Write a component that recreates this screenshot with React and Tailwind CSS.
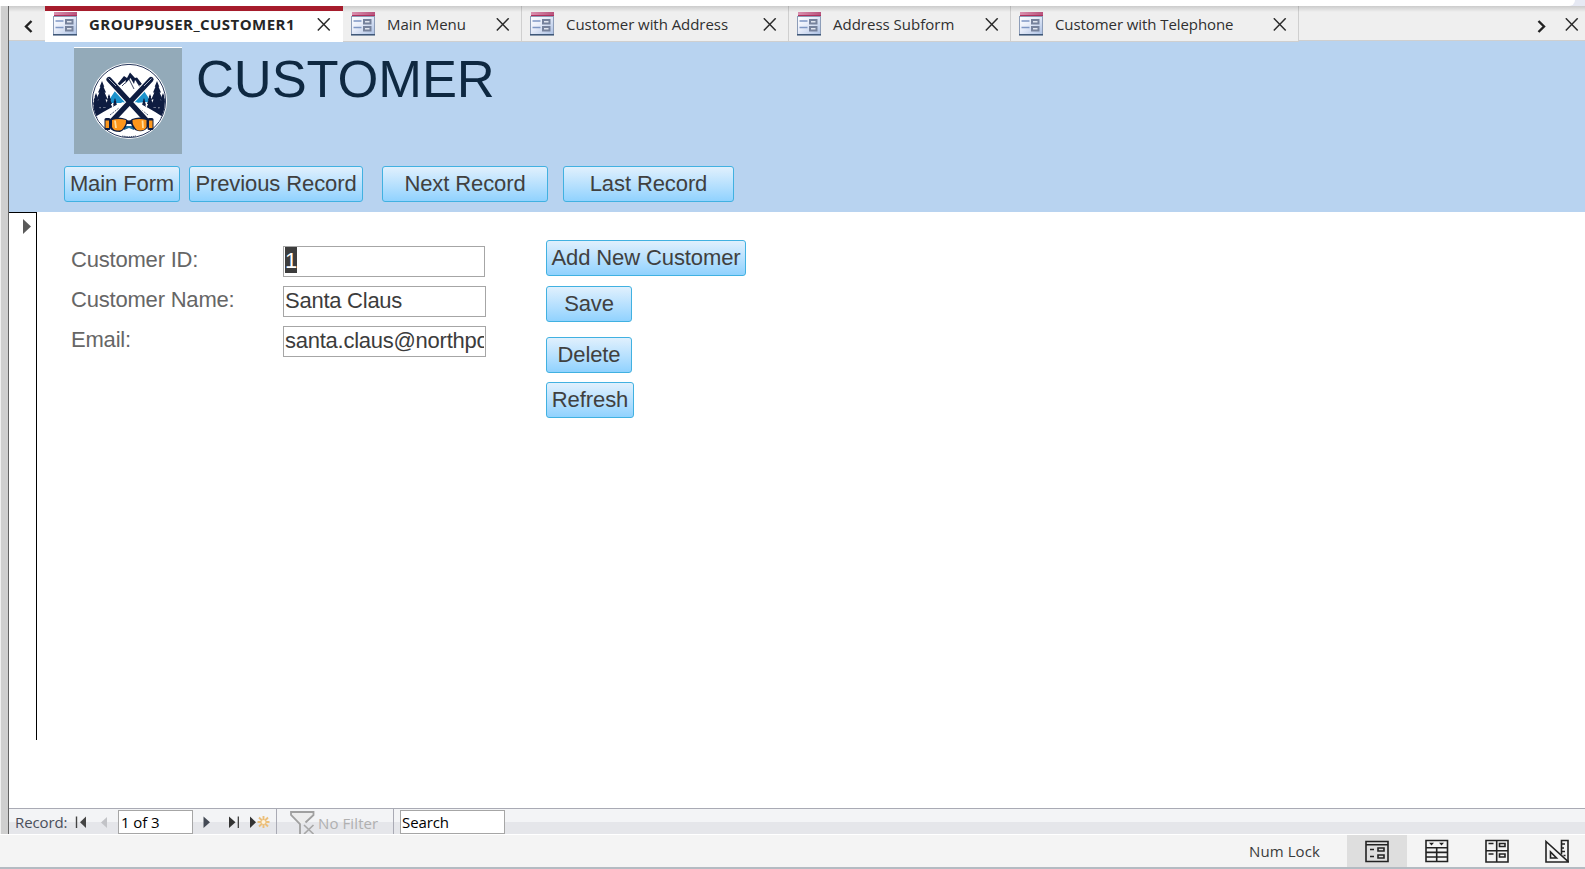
import React from "react";

const ui = "font-['Open_Sans','Noto_Sans',sans-serif] whitespace-nowrap";
const arial = "font-['Liberation_Sans',Arial,sans-serif] whitespace-nowrap";

function FormIcon() {
  return (
    <svg className="block shrink-0" width="24" height="24" viewBox="0 0 24 24">
      <defs>
        <linearGradient id="fi-head" x1="0" y1="0" x2="1" y2="0">
          <stop offset="0" stopColor="#d98fae" />
          <stop offset="1" stopColor="#b8527c" />
        </linearGradient>
        <linearGradient id="fi-body" x1="0" y1="0" x2="1" y2="1">
          <stop offset="0" stopColor="#ffffff" />
          <stop offset="0.4" stopColor="#e9eefa" />
          <stop offset="1" stopColor="#a9bee2" />
        </linearGradient>
      </defs>
      <rect x="0.5" y="4.5" width="23" height="18.5" fill="url(#fi-body)" stroke="#8d9db8" />
      <path d="M0 22.7H24" stroke="#3f5878" strokeWidth="1.4" />
      <rect x="1" y="0" width="23" height="4" fill="url(#fi-head)" />
      <path d="M1 3.5H24" stroke="#b0305c" />
      <path d="M2.500 9H10.500M2.500 15.500H10.500" stroke="#7f97c4" strokeWidth="1.600" />
      <rect x="13" y="8" width="6.500" height="3.500" fill="#dfe4ee" stroke="#76829c" strokeWidth="2" />
      <rect x="13" y="15" width="6.500" height="3.500" fill="#dfe4ee" stroke="#76829c" strokeWidth="2" />
    </svg>
  );
}

function CloseIcon() {
  return (
    <svg className="block shrink-0" width="14" height="14" viewBox="0 0 14 14">
      <path d="M0.8 0.3L12.700 12.500M12.700 0.3L0.8 12.500" stroke="#2b2b2b" strokeWidth="1.5" fill="none" />
    </svg>
  );
}

function Tab({ label, width, textWidth, spacing = "" }) {
  return (
    <div className={`flex h-[36px] shrink-0 items-start border-r border-b border-[#cfcfcf] pt-[6px] pl-[8px] ${width}`}>
      <FormIcon />
      <span className={`${ui} ml-[12px] text-[15px] leading-[24px] text-[#303030] ${textWidth} ${spacing}`}>{label}</span>
      <div className="mt-[6px]">
        <CloseIcon />
      </div>
    </div>
  );
}

function FormButton({ children, className }) {
  return (
    <button
      className={`${arial} h-[36px] shrink-0 rounded-[3px] border border-[#41b1e1] bg-linear-to-b from-[#e0f0fd] to-[#90d2fe] pb-px text-center text-[22px] leading-[33px] tracking-[-0.1px] text-[#404040] ${className}`}
    >
      {children}
    </button>
  );
}

function Tree({ x, y, s }) {
  return (
    <path
      transform={`translate(${x} ${y}) scale(${s})`}
      d="M0 0L2 5L1.3 5L3.5 10L2.3 10L5 16L3 16L6 23L1 23V27H-1V23L-6 23L-3 16L-5 16L-2.3 10L-3.5 10L-1.3 5L-2 5Z"
      fill="#0e1c40"
    />
  );
}

function Logo() {
  return (
    <svg className="block" width="108" height="106" viewBox="0 0 108 106">
      <defs>
        <clipPath id="logo-disc">
          <circle cx="55" cy="53" r="36" />
        </clipPath>
      </defs>
      <circle cx="55" cy="53" r="38" fill="#fff" />
      <circle cx="55" cy="53" r="36.600" fill="#fff" stroke="#27375c" strokeWidth="1" />
      <g clipPath="url(#logo-disc)">
        <path d="M33 55L41 43L46 45L52 52L58 52L65 45L70 43L78 55L72 54L62 55L55 57L46 55Z" fill="#1b93cd" />
        <path d="M41 39L50 28L53 30L56 24.500L61 30L63 29.500L71 40L65 37L61 32L60 36L56.500 30L51 36L52 32L46 37Z" fill="#0e1c40" />
        <path d="M48 38L51 35M55 31L60 41M63 34L67 41" stroke="#0e1c40" strokeWidth="0.8" />
        <Tree x={28} y={33} s={1.15} />
        <Tree x={22} y={45} s={0.75} />
        <Tree x={35} y={46} s={0.62} />
        <Tree x={41} y={50} s={0.42} />
        <Tree x={83} y={33} s={1.15} />
        <Tree x={89} y={45} s={0.75} />
        <Tree x={76} y={46} s={0.62} />
        <Tree x={70} y={50} s={0.42} />
        <path d="M17 62Q30 58 39 61L31 70H20ZM93 62Q80 58 71 61L79 70H90Z" fill="#0e1c40" />
        <path d="M21 69Q37 59 49 54L53 57L37 76H22ZM89 69Q74 59 62 54L57 57L73 76H88Z" fill="#fff" />
        <path d="M36 67L45 60M74 67L65 60" stroke="#4c5874" strokeWidth="1" strokeDasharray="2 1" />
        <path d="M23 77L33 83M87 77L78 83" stroke="#1b93cd" strokeWidth="1.2" strokeDasharray="2 1" />
      </g>
      <path d="M35 31.500L73 73M77 31.500L38 73" stroke="#fff" strokeWidth="7.500" strokeLinecap="round" />
      <path d="M35 31.500L73 73M77 31.500L38 73" stroke="#0e1c40" strokeWidth="5.200" strokeLinecap="round" />
      <path d="M34.500 30.500L42 38M77.500 30.500L70 38" stroke="#cbd3df" strokeWidth="0.800" />
      <path d="M50 78H60V82L55 80L50 82Z" fill="#1b6f9c" />
      <rect x="30.500" y="70" width="6" height="12" rx="1.500" fill="#0e1c40" />
      <rect x="73.500" y="70" width="6" height="12" rx="1.500" fill="#0e1c40" />
      <rect x="31.500" y="72.500" width="3.500" height="7.500" fill="#fc961b" />
      <rect x="75" y="72.500" width="3.500" height="7.500" fill="#fc961b" />
      <path d="M36 71Q45 68 52 71Q55 74 58 71Q65 68 74 71V79Q71 84 64 83Q59 82 57 76H53Q51 82 46 84Q38 84 36 80Z" fill="#0e1c40" />
      <path d="M38 72Q45 70 52 72Q52.500 77 47.500 82Q40 84 38 79ZM72.500 72Q65 70 58.500 72Q58 77 63 82Q70 84 72.500 79Z" fill="#fc961b" />
      <path d="M41 72.500L42 80M68.500 72.500L69 80" stroke="#ffdc9b" strokeWidth="1.800" />
      <path d="M48 88Q55 89.500 62 88" stroke="#4b5873" strokeWidth="1.200" strokeDasharray="1.500 0.700" fill="none" />
    </svg>
  );
}

function Field({ className, children }) {
  return (
    <div className={`${arial} h-[31px] border border-[#a6a6a6] bg-white px-px text-[22px] leading-[27px] tracking-[-0.25px] text-[#3c3c3c] ${className}`}>
      <div className="h-[29px] overflow-hidden">{children}</div>
    </div>
  );
}

function TabBar() {
  return (
    <div className="relative flex h-[35px] shrink-0 bg-[#efefef]">
      <div className="flex h-[35px] w-[36px] shrink-0 items-start border-b border-[#cfcfcf] pt-[14px] pl-[15px]">
        <svg width="9" height="13" viewBox="0 0 9 13">
          <path d="M7.500 1L2 6.500L7.500 12" stroke="#222" strokeWidth="2.400" fill="none" />
        </svg>
      </div>
      <div className="flex h-[36px] w-[298px] shrink-0 items-start border-t-5 border-[#a61c2c] bg-white pt-[1px] pl-[8px]">
        <FormIcon />
        <span className={`${ui} ml-[12px] w-[228px] text-[15px] leading-[24px] font-bold tracking-[0.45px] text-[#262626]`}>
          GROUP9USER_CUSTOMER1
        </span>
        <div className="mt-[6px]">
          <CloseIcon />
        </div>
      </div>
      <Tab label="Main Menu" width="w-[179px]" textWidth="w-[109px]" />
      <Tab label="Customer with Address" width="w-[267px]" textWidth="w-[197px]" spacing="tracking-[-0.05px]" />
      <Tab label="Address Subform" width="w-[222px]" textWidth="w-[152px]" />
      <Tab label="Customer with Telephone" width="w-[288px]" textWidth="w-[218px]" spacing="tracking-[-0.08px]" />
      <div className="flex h-[35px] flex-1 items-start justify-end border-b border-[#cfcfcf] pr-[6px]">
        <svg className="mt-[14px] mr-[19px]" width="9" height="13" viewBox="0 0 9 13">
          <path d="M1.500 1L7 6.500L1.500 12" stroke="#222" strokeWidth="2.400" fill="none" />
        </svg>
        <div className="mt-[12px]">
          <CloseIcon />
        </div>
      </div>
      <div className="pointer-events-none absolute inset-x-0 top-0 h-[6px] bg-linear-to-b from-black/15 to-transparent" />
      <div className="pointer-events-none absolute top-0 left-[36px] h-[5px] w-[298px] bg-[#a61c2c]" />
    </div>
  );
}

function Header() {
  return (
    <header className="h-[171px] shrink-0 bg-[#b8d3f0] pt-[6px]">
      <div className="flex h-[107px] pl-[65px]">
        <div className="h-[107px] w-[108px] border-t border-white bg-[#93aab9]">
          <Logo />
        </div>
        <h1 className={`${arial} mt-px ml-[14px] h-[60px] text-[52.500px] leading-[62px] tracking-[-0.1px] text-[#0e2841]`}>CUSTOMER</h1>
      </div>
      <div className="mt-[12px] flex pl-[55px]">
        <FormButton className="w-[116px]">Main Form</FormButton>
        <FormButton className="ml-[9px] w-[174px]">Previous Record</FormButton>
        <FormButton className="ml-[19px] w-[166px]">Next Record</FormButton>
        <FormButton className="ml-[15px] w-[171px]">Last Record</FormButton>
      </div>
    </header>
  );
}

function Detail() {
  return (
    <main className="flex flex-1 bg-white">
      <div className="h-[528px] w-[28px] shrink-0 border-t border-r border-black pt-[6px] pl-[14px]">
        <svg className="block" width="8" height="15" viewBox="0 0 8 15">
          <path d="M0 0L8 7.500L0 15Z" fill="#5a5a5a" />
        </svg>
      </div>
      <div className={`${arial} ml-[34px] flex w-[212px] flex-col pt-[28px] text-[22px] leading-[40px] tracking-[-0.2px] text-[#666]`}>
        <span>Customer ID:</span>
        <span>Customer Name:</span>
        <span>Email:</span>
      </div>
      <div className="flex w-[203px] flex-col gap-[9px] pt-[34px]">
        <Field className="w-[202px]">
          <span className="inline-block h-[26px] w-[12px] bg-[#3c3c3c] align-top text-white">1</span>
        </Field>
        <Field className="w-[203px]">Santa Claus</Field>
        <Field className="w-[203px]">santa.claus@northpo</Field>
      </div>
      <div className="ml-[60px] flex flex-col pt-[28px]">
        <FormButton className="w-[200px]">Add New Customer</FormButton>
        <FormButton className="mt-[10px] w-[86px]">Save</FormButton>
        <FormButton className="mt-[15px] w-[86px]">Delete</FormButton>
        <FormButton className="mt-[9px] w-[88px]">Refresh</FormButton>
      </div>
    </main>
  );
}

function RecordBar() {
  return (
    <div className="flex h-[26px] shrink-0 border-t border-[#a9aab4] bg-[linear-gradient(to_bottom,#f3f4f6_0,#f3f4f6_13px,#e5e6ea_13px)]">
      <div className="flex w-[268px] shrink-0 border-r border-[#a9aab4] pl-[6px]">
        <span className={`${ui} w-[60px] text-[15px] leading-[26px] tracking-[-0.1px] text-[#4a4f5a]`}>Record:</span>
        <svg className="mt-[7px] block" width="34" height="13" viewBox="0 0 34 13">
          <path d="M1.500 0.500V12" stroke="#444" strokeWidth="1.400" />
          <path d="M11 0.500V12L5 6.300Z" fill="#444" />
          <path d="M32 1V12L26 6.500Z" fill="#c2c3c7" />
        </svg>
        <div className={`${ui} mt-[1px] ml-[9px] h-[24px] w-[75px] border border-[#a6a6a6] bg-white pl-[2px] text-[15px] leading-[22px] tracking-[-0.1px] text-black`}>1 of 3</div>
        <svg className="mt-[6px] ml-[10px] block" width="70" height="14" viewBox="0 0 70 14">
          <path d="M0.500 1.500V13L7 7.200Z" fill="#444a55" />
          <path d="M26 1.500V13L32.500 7.200Z" fill="#333" />
          <path d="M35.300 1.500V13" stroke="#333" strokeWidth="1.200" />
          <path d="M47 1.500V13L53 7.200Z" fill="#333" />
          <path d="M60.500 1V13M54.500 7H66.500M56 2.500L65 11.500M65 2.500L56 11.500" stroke="#ecbf7a" strokeWidth="1.900" />
          <circle cx="60.500" cy="7" r="2" fill="#fdf3df" />
        </svg>
      </div>
      <div className="flex w-[117px] shrink-0 border-r border-[#a9aab4] pl-[13px]">
        <svg className="mt-[2px] block" width="26" height="23" viewBox="0 0 26 23">
          <path d="M1 1H24V3.500L15.500 11.500L10.500 13L1 3.500Z" fill="#ededed" />
          <path d="M10 23V13L1 4V1H23.500V4L15.500 11.500" stroke="#a0a0a0" strokeWidth="1.800" fill="none" />
          <path d="M14 14L23.500 23M23.500 14L14 23" stroke="#a8a8a8" strokeWidth="1.700" />
        </svg>
        <span className={`${ui} ml-[2px] text-[15px] leading-[28px] tracking-[0.1px] text-[#b0b0b0]`}>No Filter</span>
      </div>
      <div className={`${ui} mt-[1px] ml-[6px] h-[24px] w-[105px] border border-[#a6a6a6] bg-white pl-px text-[15px] leading-[22px] tracking-[-0.1px] text-black`}>Search</div>
    </div>
  );
}

function StatusBar() {
  const cell = "flex h-[32px] w-[60px] shrink-0 items-center justify-center";
  return (
    <footer className="flex h-[33px] items-start justify-end overflow-hidden border-t border-white bg-[#f4f4f4]">
      <span className={`${ui} mr-[27px] text-[15px] leading-[32px] tracking-[0.1px] text-[#3b3b3b]`}>Num Lock</span>
      <div className={`${cell} bg-[#dedede]`}>
        <svg width="24" height="24" viewBox="0 0 24 24" fill="none" stroke="#222" strokeWidth="1.600">
          <path d="M1 2.500H23V22.500H1ZM1 5.700H23M5 10.500H9M5 17.500H9" />
          <path d="M13 9H19V12H13ZM13 16H19V19H13Z" />
        </svg>
      </div>
      <div className={cell}>
        <svg width="24" height="24" viewBox="0 0 24 24" fill="none" stroke="#222" strokeWidth="1.600">
          <path d="M1 1.500H22.500V22.500H1ZM1 8.800H22.500M1 13.400H22.500M1 18H22.500M11.700 8.800V22.500" />
          <path d="M4 3.800H9L6.500 6.500ZM14 3.800H19L16.500 6.500Z" fill="#222" stroke="none" />
        </svg>
      </div>
      <div className={cell}>
        <svg width="24" height="24" viewBox="0 0 24 24" fill="none" stroke="#222" strokeWidth="1.600">
          <path d="M1 1.500H23V23H1ZM1 11.700H23M11.700 1.500V23M3.500 4.500H8.500M3.500 15H8.500" />
          <path d="M14.500 4.500H20V7.500H14.500ZM14.500 15H20V18H14.500Z" />
        </svg>
      </div>
      <div className="flex h-[32px] w-[58px] shrink-0 items-center pl-[18px]">
        <svg width="24" height="24" viewBox="0 0 24 24" fill="none" stroke="#222" strokeWidth="1.600">
          <path d="M1 2.500V23H23.500ZM5.500 13V19H11.500Z" />
          <path d="M16.500 15.500V1.500H23V22.500M16.500 5H20M16.500 9H19M16.500 12.500H20M18.500 16.500H20.500" />
        </svg>
      </div>
    </footer>
  );
}

export default function App() {
  return (
    <div className="flex h-[869px] w-[1585px] flex-col overflow-hidden bg-[#f4f4f4]">
      <div className="h-[6px] shrink-0 bg-[#e6e9f3]">
        <div className="h-[6px] w-[1575px] rounded-br-[8px] bg-white" />
      </div>
      <div className="flex h-[828px] shrink-0">
        <div className="w-[9px] shrink-0 border-r border-l border-r-[#636363] border-l-[#f0f0f0] bg-[#cfcfcf]" />
        <div className="flex w-[1576px] flex-col">
          <TabBar />
          <Header />
          <Detail />
          <RecordBar />
        </div>
      </div>
      <div className="h-[35px] shrink-0 border-b-2 border-[#b4bbc2]">
        <StatusBar />
      </div>
    </div>
  );
}
